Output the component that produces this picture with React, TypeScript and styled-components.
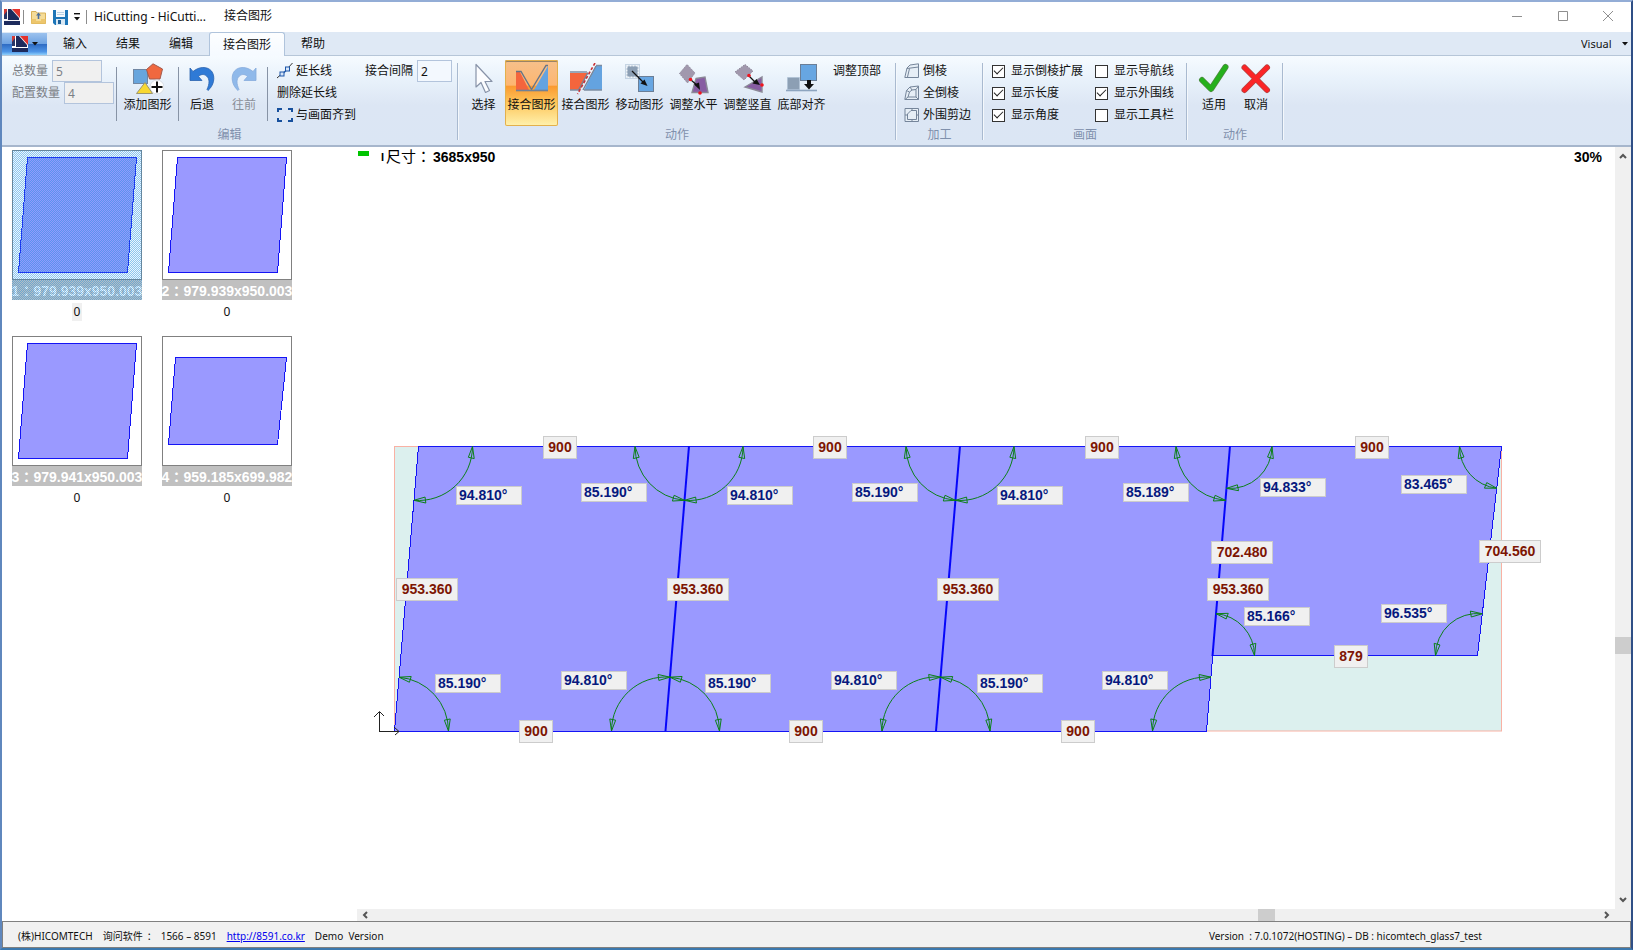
import React from "react";
import styled, { createGlobalStyle, css } from "styled-components";

const GlobalStyle = createGlobalStyle`
  *, *::before, *::after { box-sizing: border-box; }
  html, body { margin: 0; padding: 0; }
  body {
    font-family: "Noto Sans", "Noto Sans CJK SC", sans-serif;
    font-size: 12px;
    line-height: 16px;
    color: #111;
    background: #fff;
  }
  button, input, select { font: inherit; color: inherit; margin: 0; }
  button { cursor: pointer; }
`;

/* ---------- window frame ---------- */

const Window = styled.div`
  display: flex;
  flex-direction: column;
  height: 100vh;
  border: 2px solid;
  border-color: #93add6 #2f4f86 #3b78ae #5f87bd;
  background: #fff;
  overflow: hidden;
`;

const TitleBar = styled.header`
  display: flex;
  align-items: center;
  flex: none;
  height: 30px;
  padding-left: 2px;
`;

const QuickAccess = styled.div`
  display: flex;
  align-items: center;
`;

const IconButton = styled.button<{ $w: number }>`
  display: flex;
  align-items: center;
  justify-content: center;
  width: ${(p) => p.$w}px;
  height: 28px;
  padding: 0;
  border: 0;
  background: none;
`;

const ThinRule = styled.span`
  width: 1px;
  height: 14px;
  margin: 0 3px;
  background: #8c8c8c;
`;

const WindowTitle = styled.h1`
  margin: 0;
  padding-left: 4px;
  width: 134px;
  font-size: 12px;
  font-weight: 400;
  line-height: 20px;
  white-space: nowrap;
`;

const ContextTitle = styled.span`
  flex: 1;
  padding-bottom: 2px;
  line-height: 16px;
`;

const WindowControls = styled.div`
  display: flex;
  align-self: flex-start;
`;

/* ---------- tabs ---------- */

const TabStrip = styled.nav`
  display: flex;
  align-items: flex-end;
  flex: none;
  height: 24px;
  background: #dfe9f5;
  border-bottom: 1px solid #b6c6d8;
`;

const AppButton = styled.button`
  display: flex;
  align-items: center;
  gap: 4px;
  width: 45px;
  height: 22px;
  padding: 0 0 0 10px;
  margin-right: 3px;
  border: 0;
  background: linear-gradient(#9cc2ee 0%, #6fa3e2 48%, #2f6cc4 52%, #4f96e8 85%, #8fd0fb 100%);
`;

const Tab = styled.button<{ $active?: boolean }>`
  height: 23px;
  padding: 0 12px;
  margin-right: 3px;
  border: 1px solid transparent;
  border-bottom: 0;
  border-radius: 3px 3px 0 0;
  background: transparent;
  line-height: 22px;
  white-space: nowrap;
  ${(p) =>
    p.$active &&
    css`
      margin-bottom: -1px;
      height: 24px;
      padding: 0 13px;
      border-color: #b0c4dc;
      background: linear-gradient(#fdfeff, #f5faff);
    `}
`;

const StyleChooser = styled.label`
  display: flex;
  align-items: center;
  gap: 9px;
  height: 22px;
  margin-left: auto;
  padding-right: 3px;
`;

const StyleSelect = styled.select`
  appearance: none;
  width: 32px;
  padding: 0;
  border: 0;
  background: transparent;
  font-size: 11px;
`;

/* ---------- ribbon ---------- */

const Ribbon = styled.div`
  display: flex;
  flex: none;
  height: 91px;
  padding-top: 4px;
  background: linear-gradient(#f6fbff 0%, #e9f2fb 25%, #dce6f4 55%, #dbe6f4 100%);
  border-bottom: 2px solid #a6b6cc;
`;

const Group = styled.section`
  display: flex;
  flex-direction: column;
`;

const GroupBody = styled.div<{ $left: number; $right: number }>`
  display: flex;
  flex: none;
  height: 66px;
  padding: 0 ${(p) => p.$right}px 0 ${(p) => p.$left}px;
`;

const GroupLabel = styled.div`
  text-align: center;
  color: #7f90ac;
  line-height: 18px;
`;

const GroupRule = styled.div`
  flex: none;
  width: 2px;
  height: 77px;
  margin-top: 3px;
  background: linear-gradient(90deg, #a9bad0 50%, #f4f8fc 50%);
`;

const InnerRule = styled.div`
  width: 1px;
  height: 54px;
  margin: 7px 2px 0;
  background: #8793a5;
`;

const Stack = styled.div`
  display: flex;
  flex-direction: column;
`;

const FieldRow = styled.label<{ $muted?: boolean }>`
  display: flex;
  align-items: center;
  gap: 4px;
  height: 22px;
  white-space: nowrap;
  color: ${(p) => (p.$muted ? "#7b7f86" : "#111")};
`;

const Field = styled.input<{ $w: number }>`
  width: ${(p) => p.$w}px;
  height: 22px;
  padding: 0 3px;
  border: 1px solid #b3c4dc;
  background: #f3f8fe;
  &:disabled {
    background: #f0f0f0;
    color: #7b7f86;
  }
`;

const BigButton = styled.button<{ $w: number; $active?: boolean; $muted?: boolean }>`
  display: flex;
  flex-direction: column;
  align-items: center;
  width: ${(p) => p.$w}px;
  height: 66px;
  padding: 3px 0 0;
  border: 0;
  border-radius: 2px;
  background: none;
  color: ${(p) => (p.$muted ? "#8a8f98" : "#111")};
  white-space: nowrap;
  svg { flex: none; margin-bottom: 2px; }
  ${(p) =>
    p.$active &&
    css`
      background: linear-gradient(#f6c08b 0%, #fdb671 38%, #fb9a30 40%, #fdc65c 65%, #fff2ae 100%);
      box-shadow: inset 0 0 0 1px #e3b04c, inset 0 2px 0 #9a8365;
    `}
`;

const ToolRow = styled.div`
  display: flex;
  gap: 1px;
  margin-right: 2px;
`;

const SmallButton = styled.button`
  display: flex;
  align-items: center;
  gap: 3px;
  height: 22px;
  padding: 0 3px;
  border: 0;
  background: none;
  white-space: nowrap;
`;

const CheckRow = styled.label`
  display: flex;
  align-items: center;
  gap: 6px;
  height: 22px;
  white-space: nowrap;
`;

const CheckBox = styled.input`
  appearance: none;
  display: grid;
  place-items: center;
  width: 13px;
  height: 13px;
  border: 1px solid #333;
  background: #fff;
  &:checked::after {
    content: "";
    width: 9px;
    height: 5px;
    margin-bottom: 3px;
    border-left: 1px solid #222;
    border-bottom: 1px solid #222;
    transform: rotate(-45deg);
  }
`;

/* ---------- workspace ---------- */

const Workspace = styled.main`
  display: flex;
  flex: 1;
  min-height: 0;
`;

const PartsPane = styled.ul`
  display: grid;
  grid-template-columns: repeat(2, 130px);
  grid-auto-rows: 171px;
  gap: 15px 20px;
  flex: none;
  align-content: start;
  width: 355px;
  margin: 0;
  padding: 3px 10px;
  list-style: none;
`;

const PartCard = styled.li`
  display: flex;
  flex-direction: column;
  align-items: center;
`;

const PartFace = styled.div<{ $selected?: boolean }>`
  position: relative;
  width: 130px;
  height: 150px;
  overflow: hidden;
  ${(p) =>
    p.$selected &&
    css`
      &::after {
        content: "";
        position: absolute;
        inset: 0;
        background: repeating-conic-gradient(rgba(30, 140, 220, 0.5) 0 25%, rgba(80, 180, 250, 0.12) 0 50%) 0 0 / 2px 2px;
      }
    `}
`;

const PartCaption = styled.div`
  display: flex;
  justify-content: center;
  height: 20px;
  background: #c0c0c0;
  color: #fff;
  font: bold 14px/22px "Liberation Sans", "Noto Sans CJK TC", sans-serif;
  white-space: nowrap;
`;

const PartCount = styled.span<{ $focus?: boolean }>`
  margin-top: 3px;
  padding: 0 2px;
  font-size: 12px;
  line-height: 18px;
  background: ${(p) => (p.$focus ? "#f0f0f0" : "transparent")};
`;

const CanvasPane = styled.section`
  display: grid;
  grid-template: minmax(0, 1fr) 12px / minmax(0, 1fr) 16px;
  flex: 1;
  min-width: 0;
`;

const Viewport = styled.div`
  overflow: hidden;
  svg { display: block; }
`;

const VTrack = styled.div`
  display: flex;
  flex-direction: column;
  align-items: center;
  background: #f0f0f0;
`;

const HTrack = styled.div`
  display: flex;
  align-items: center;
  background: #f0f0f0;
`;

const TrackSpace = styled.span<{ $grow: number }>`
  flex: ${(p) => p.$grow} 1 0;
`;

const VThumb = styled.span`
  width: 16px;
  height: 17px;
  background: #cdcdcd;
`;

const HThumb = styled.span`
  width: 17px;
  height: 12px;
  background: #cdcdcd;
`;

const ArrowButton = styled.button`
  display: flex;
  align-items: center;
  justify-content: center;
  width: 16px;
  height: 100%;
  max-height: 18px;
  padding: 0;
  border: 0;
  background: none;
`;

/* ---------- status bar ---------- */

const StatusBar = styled.footer`
  display: flex;
  align-items: center;
  flex: none;
  height: 27px;
  padding: 2px 148px 0 15px;
  border: 1px solid #808080;
  background: #f1f1f1;
  font-size: 10px;
  white-space: pre;
`;

const StatusText = styled.span<{ $gap?: number }>`
  margin-right: ${(p) => p.$gap ?? 0}px;
`;

const StatusLink = styled.a`
  color: #0000ee;
  margin-right: 10px;
`;

const StatusRight = styled.span`
  margin-left: auto;
`;

/* ---------- icons ---------- */

const Logo = ({ light }: { light?: boolean }) => (
  <svg width="16" height="16" viewBox="0 0 16 16" aria-hidden="true">
    <rect width="16" height="16" fill={light ? "#fff" : "#f6f4f6"} />
    <path d="M0 0H3V10H0Z" fill="#283466" />
    <path d="M0 0H3V2L0 6Z" fill="#d33a35" />
    <path d="M4 0H7L15 9V11H4Z" fill="#1d2a5c" />
    <path d="M8 0H16V9Z" fill="#e3322c" />
    <path d="M0 12H16V16H0Z" fill="#1d2a5c" />
  </svg>
);

const Caret = ({ bar }: { bar?: boolean }) => (
  <svg width="6" height={bar ? 8 : 4} viewBox={bar ? "0 0 6 8" : "0 0 6 4"} aria-hidden="true">
    {bar ? (
      <>
        <rect width="6" height="1.4" fill="#111" />
        <path d="M0 4H6L3 7.5Z" fill="#111" />
      </>
    ) : (
      <path d="M0 0H6L3 3.6Z" fill="#111" />
    )}
  </svg>
);

const FolderIcon = () => (
  <svg width="15" height="14" viewBox="0 0 15 14" aria-hidden="true">
    <path d="M.5 1.5H5L6 3H14.5V13.5H.5Z" fill="#f5dc98" stroke="#d9b257" />
    <path d="M.5 9H5V11H10V9H14.5V13.5H.5Z" fill="#edc66c" />
    <path d="M7.5 2.5L10 5.5H8.3V9H6.7V5.5H5Z" fill="#4d6f9c" />
  </svg>
);

const SaveIcon = () => (
  <svg width="15" height="15" viewBox="0 0 15 15" aria-hidden="true">
    <path d="M0 0H15V15H2L0 13Z" fill="#1c75b8" />
    <rect x="3" y="0" width="9" height="7" fill="#f4f9fd" />
    <path d="M4 2.5H11M4 4.5H11" stroke="#b5cfe4" />
    <rect x="3" y="9" width="9" height="6" fill="#d8e8f4" />
    <rect x="5" y="10" width="3" height="4" fill="#1c5f98" />
  </svg>
);

const WinGlyph = ({ d }: { d: string }) => (
  <svg width="12" height="12" viewBox="0 0 12 12" fill="none" stroke="#8f8f8f" aria-hidden="true">
    <path d={d} />
  </svg>
);

const AddShapeIcon = () => (
  <svg width="32" height="32" viewBox="0 0 32 32" aria-hidden="true">
    <rect x="1.500" y="6.500" width="14" height="14" fill="#67a5dd" stroke="#7187a3" />
    <path d="M21 .8L30.500 6L28 16H17.500L14.500 6.500Z" fill="#f0683f" stroke="#a35a4c" />
    <circle cx="25" cy="24" r="7" fill="#fff" stroke="#d7dce3" />
    <path d="M13 19.500L20.500 30.500H4.500Z" fill="#f8d832" stroke="#9b9670" />
    <path d="M25 18.500V29.500M19.500 24H30.500" stroke="#111" strokeWidth="2" />
  </svg>
);

const UndoIcon = ({ redo }: { redo?: boolean }) => (
  <svg width="26" height="32" viewBox="0 0 26 32" aria-hidden="true">
    <g transform={redo ? "translate(26 0) scale(-1 1)" : undefined}>
      <path
        d="M1 5L4 8.500C10 3.500 18 3 22.500 8C27 14 24.500 23 19 27.500L18 26.500C20.500 21 21 16 17.500 13C14.500 10.500 11.500 11.500 9.500 13.500L13 17.500L1 17.500Z"
        fill={redo ? "#8fb9ea" : "#2f7ad6"}
        stroke={redo ? "#86abdc" : "#2a62ad"}
        strokeWidth=".8"
      />
    </g>
  </svg>
);

const ExtendIcon = () => (
  <svg width="16" height="16" viewBox="0 0 16 16" fill="none" aria-hidden="true">
    <path d="M0 15L4 11.500M11 5L15.500 0" stroke="#333" />
    <path d="M6 10.500L9 7.500" stroke="#1d56a8" strokeWidth="1.400" />
    <rect x="3" y="9" width="4" height="4" fill="#d6e6fa" stroke="#1d56a8" />
    <rect x="8.500" y="4" width="4" height="4" fill="#d6e6fa" stroke="#1d56a8" />
  </svg>
);

const FitIcon = () => (
  <svg width="16" height="16" viewBox="0 0 16 16" fill="none" stroke="#17509d" strokeWidth="2" aria-hidden="true">
    <path d="M1 5V2H5M11 2H15V5M15 11V14H11M5 14H1V11" />
  </svg>
);

const PointerIcon = () => (
  <svg width="32" height="32" viewBox="0 0 32 32" aria-hidden="true">
    <path
      d="M8 1.500V24L13 19.500L17.500 29.500L21.500 27.500L17 18.500H24Z"
      fill="#fcfdff"
      stroke="#8893a8"
      strokeWidth="1.200"
      strokeLinejoin="round"
    />
  </svg>
);

const JoinIcon = () => (
  <svg width="32" height="32" viewBox="0 0 32 32" aria-hidden="true">
    <path d="M0 9H4L13 27H0Z" fill="#f4653d" />
    <path d="M32 3V27H18Z" fill="#64a3e0" />
    <path d="M0 8.500H5L15.500 26.500L30 2.500H32" fill="none" stroke="#667487" strokeWidth="1.400" />
    <path d="M0 27.500H32" stroke="#708196" strokeWidth="1.600" />
  </svg>
);

const CutIcon = () => (
  <svg width="32" height="32" viewBox="0 0 32 32" aria-hidden="true">
    <path d="M0 10H18L10 27H0Z" fill="#f4653d" />
    <path d="M26 3H32V27H14Z" fill="#64a3e0" />
    <path d="M0 9H17M26 2.500H32M0 27H9M14 27H32" stroke="#7d8da3" strokeWidth="1.600" />
    <path d="M18 9.500L8.500 27M26 3L13 27" stroke="#758396" strokeWidth="1.400" />
    <path d="M25 0L7.500 31" stroke="#c83035" strokeWidth="1.600" strokeDasharray="3 2" />
  </svg>
);

const MoveIcon = () => (
  <svg width="32" height="32" viewBox="0 0 32 32" aria-hidden="true">
    <rect x="2.500" y="2.500" width="12" height="12" fill="#8c9fb4" stroke="#f0f5fa" strokeDasharray="2 1" strokeWidth="2" />
    <rect x="1.500" y="1.500" width="14" height="14" fill="none" stroke="#9db3cb" strokeDasharray="1 1" />
    <rect x="14.500" y="13.500" width="15" height="15" fill="#67a6e2" stroke="#6b7e96" />
    <path d="M8 8L19 19" stroke="#111" strokeWidth="1.200" />
    <path d="M23.500 23L16.500 20.500L20.500 16.500Z" fill="#111" />
  </svg>
);

const AlignIcon = ({ vertical }: { vertical?: boolean }) =>
  vertical ? (
    <svg width="32" height="32" viewBox="0 0 32 32" aria-hidden="true">
      <path d="M3 9L13 1.500L21 8L12 17Z" fill="#a198ad" stroke="#8f889a" strokeDasharray="1.500 1" />
      <path d="M13 24L30 14V29Z" fill="#875ca2" stroke="#8b8997" strokeWidth="1.400" />
      <path d="M17 13L23 19" stroke="#111" strokeWidth="1.200" />
      <path d="M28 22L20.500 20.500L24.500 16Z" fill="#111" />
      <circle cx="17" cy="12.500" r="1.800" fill="#f0141e" />
      <circle cx="30" cy="22" r="1.800" fill="#f0141e" />
    </svg>
  ) : (
    <svg width="32" height="32" viewBox="0 0 32 32" aria-hidden="true">
      <path d="M1.500 10.500L9 1.500L17 10L9.500 20Z" fill="#a198ad" stroke="#8f889a" strokeDasharray="1.500 1" />
      <path d="M18 15.500L27 14L30 29.500H14Z" fill="#875ca2" stroke="#8b8997" strokeWidth="1.400" />
      <path d="M13 17L20 23" stroke="#111" strokeWidth="1.200" />
      <path d="M22 27L16 21.500L21 19.500Z" fill="#111" />
      <circle cx="12.500" cy="16.500" r="1.800" fill="#f0141e" />
      <circle cx="22" cy="30" r="1.800" fill="#f0141e" />
    </svg>
  );

const BottomIcon = () => (
  <svg width="32" height="32" viewBox="0 0 32 32" aria-hidden="true">
    <rect x="1.500" y="14.500" width="12" height="12" fill="#8c9fb4" stroke="#a9bdd2" strokeDasharray="1 1" />
    <rect x="14.500" y="1.500" width="16" height="16" fill="#67a6e2" stroke="#6b7e96" />
    <path d="M0 27.500H31" stroke="#8da4bf" strokeWidth="1.600" />
    <path d="M21 17H25V21H28L23 26.500L18 21H21Z" fill="#111" />
  </svg>
);

const BevelIcon = ({ kind }: { kind: 0 | 1 | 2 }) => (
  <svg width="16" height="16" viewBox="0 0 16 16" fill="#e6eef6" stroke="#75859a" aria-hidden="true">
    {kind === 0 && (
      <>
        <path d="M.8 14.500L3 5L6 2L14.500 .8V14.500Z" />
        <path d="M3 5.500L14.500 4M3.500 14L5.500 5.500" fill="none" />
      </>
    )}
    {kind === 1 && (
      <>
        <path d="M.8 14.500L2.500 5.500L6 2L14.500 1V14.500Z" />
        <path d="M4 12L5.500 7L8 5L12 4.500V12ZM1 14.500L4 12M14.500 14.500L12 12M14.500 1L12 4.500M2.500 5.500L5.500 7M6 2L8 5" fill="none" />
      </>
    )}
    {kind === 2 && (
      <>
        <path d="M1 1.500H14.500V14.500H1Z" />
        <path d="M3.500 12.500V7L7 3.500H12.500V12.500ZM8 1.500V3.500M1 8H3.500M12.500 8H14.500M8 12.500V14.500" fill="none" />
      </>
    )}
  </svg>
);

const ApplyIcon = () => (
  <svg width="32" height="32" viewBox="0 0 32 32" fill="none" strokeLinecap="round" strokeLinejoin="round" aria-hidden="true">
    <path d="M4 17L13 26L27.500 4" stroke="#4f8a42" strokeWidth="6" />
    <path d="M4 17L13 26L27.500 4" stroke="#25b01c" strokeWidth="4.500" />
  </svg>
);

const CancelIcon = () => (
  <svg width="32" height="32" viewBox="0 0 32 32" fill="none" strokeLinecap="round" aria-hidden="true">
    <path d="M4.500 4.500L27 27M27 4.500L4.500 27" stroke="#b3423f" strokeWidth="6" />
    <path d="M4.500 4.500L27 27M27 4.500L4.500 27" stroke="#fb2426" strokeWidth="4.500" />
  </svg>
);

const Chevron = ({ d }: { d: string }) => (
  <svg width="8" height="8" viewBox="0 0 8 8" fill="none" stroke="#555" strokeWidth="2" aria-hidden="true">
    <path d={d} />
  </svg>
);

/* ---------- drawing data ---------- */

type Point = [number, number];

const pieces: Point[][] = [
  [[418.5, 446.5], [689, 446.5], [665.5, 731], [394.5, 731]],
  [[689, 446.5], [960, 446.5], [936, 731], [665.5, 731]],
  [[960, 446.5], [1230, 446.5], [1206.5, 731], [936, 731]],
  [[1230, 446.5], [1501.5, 446.5], [1477.5, 655.5], [1212.5, 655.5]],
];

const joints: [Point, Point][] = [
  [[689, 446], [665.5, 731]],
  [[960, 446], [936, 731]],
  [[1230, 446], [1212.5, 656]],
];

const lengths: [number, number, string][] = [
  [543, 436, "900"], [813, 436, "900"], [1085, 436, "900"], [1355, 436, "900"],
  [519, 720, "900"], [789, 720, "900"], [1061, 720, "900"], [1334, 645, "879"],
  [396, 578, "953.360"], [667, 578, "953.360"], [937, 578, "953.360"],
  [1211, 541, "702.480"], [1207, 578, "953.360"], [1479, 540, "704.560"],
];

const angles: [number, number, string][] = [
  [456, 486, "94.810"], [581, 483, "85.190"], [435, 674, "85.190"], [561, 671, "94.810"],
  [727, 486, "94.810"], [852, 483, "85.190"], [705, 674, "85.190"], [831, 671, "94.810"],
  [997, 486, "94.810"], [1123, 483, "85.189"], [977, 674, "85.190"], [1102, 671, "94.810"],
  [1260, 478, "94.833"], [1401, 475, "83.465"], [1244, 607, "85.166"], [1381, 604, "96.535"],
];

/* Arrow head whose tip lies on the arc at angle a and whose base lies further along it. */
const head = (cx: number, cy: number, r: number, a: number, dir: number) => {
  const back = a + (dir * 11.5) / r;
  const at = (rad: number, ang: number) => `${cx + rad * Math.cos(ang)},${cy + rad * Math.sin(ang)}`;
  return `M${at(r, a)}L${at(r - 3, back)}L${at(r + 3, back)}Z`;
};

const AngleArc = ({ corner, prev, next, r }: { corner: Point; prev: Point; next: Point; r: number }) => {
  const [cx, cy] = corner;
  const a = Math.atan2(next[1] - cy, next[0] - cx);
  let b = Math.atan2(prev[1] - cy, prev[0] - cx);
  if (b < a) b += Math.PI * 2;
  const pt = (ang: number) => `${cx + r * Math.cos(ang)} ${cy + r * Math.sin(ang)}`;
  return (
    <path
      d={`M${pt(a)}A${r} ${r} 0 0 1 ${pt(b)}${head(cx, cy, r, a, 1)}${head(cx, cy, r, b, -1)}`}
      fill="none"
      stroke="#0c8018"
    />
  );
};

const drawingFont = { fontFamily: '"Liberation Sans", "Noto Sans CJK TC", sans-serif', fontSize: 14, fontWeight: 700 };

const Drawing = () => (
  <svg width="1258" height="762" viewBox="357 147 1258 762" role="img" aria-label="接合图形">
    <rect x="358" y="151" width="11" height="5" fill="#00c400" />
    <text x="381" y="161" {...drawingFont} fontSize={11}>I</text>
    <text x="386" y="162" {...drawingFont} fontWeight={400} fontSize={15}>尺寸：</text>
    <text x="433" y="162" {...drawingFont}>3685x950</text>
    <text x="1602" y="162" textAnchor="end" {...drawingFont}>30%</text>

    <rect x="394.500" y="446.500" width="1107" height="284.500" fill="#dcf0ee" stroke="#f9b1a4" />
    {pieces.map((p, i) => (
      <polygon key={i} points={p.join(" ")} fill="#9a99ff" stroke="#1414f5" shapeRendering="crispEdges" />
    ))}
    {joints.map(([a, b], i) => (
      <path key={i} d={`M${a}L${b}`} stroke="#0606fa" strokeWidth="2" />
    ))}
    {pieces.map((p, i) =>
      p.map((c, j) => (
        <AngleArc key={`${i}-${j}`} corner={c} prev={p[(j + 3) % 4]} next={p[(j + 1) % 4]} r={i === 3 ? 42 : 54} />
      ))
    )}
    <path d="M379.500 712V731M374 717L379.500 711.500L384 716M379 731.500H399M394 727L399 731.500L395 735" fill="none" stroke="#222" />
    {angles.map(([x, y, t], i) => (
      <g key={i}>
        <rect x={x + 0.5} y={y + 0.5} width="65" height="18" fill="#f0f0f0" stroke="#ccc" />
        <text x={x + 3} y={y + 14} fill="#06187e" {...drawingFont}>{t}°</text>
      </g>
    ))}
    {lengths.map(([x, y, t], i) => {
      const w = t.length > 3 ? 62 : 34;
      return (
        <g key={i}>
          <rect x={x + 0.5} y={y + 0.5} width={w - 1} height="22" fill="#f0f0f0" stroke="#ccc" />
          <text x={x + w / 2} y={y + 16} textAnchor="middle" fill="#7d1503" {...drawingFont}>{t}</text>
        </g>
      );
    })}
  </svg>
);

const parts = [
  { name: "1：979.939x950.003", points: "15.5,7.5 124.5,7.5 115.5,122.5 6.5,122.5", selected: true },
  { name: "2：979.939x950.003", points: "15.5,7.5 124.5,7.5 115.5,122.5 6.5,122.5" },
  { name: "3：979.941x950.003", points: "15.5,7.5 124.5,7.5 115.5,122.5 6.5,122.5" },
  { name: "4：959.185x699.982", points: "13.5,21.5 124.5,21.5 115.5,108.5 6.5,108.5" },
];

const tools = [
  { label: "接合图形", icon: <JoinIcon />, active: true },
  { label: "接合图形", icon: <CutIcon /> },
  { label: "移动图形", icon: <MoveIcon /> },
  { label: "调整水平", icon: <AlignIcon /> },
  { label: "调整竖直", icon: <AlignIcon vertical /> },
  { label: "底部对齐", icon: <BottomIcon /> },
];

const Check = ({ label, on }: { label: string; on?: boolean }) => (
  <CheckRow>
    <CheckBox type="checkbox" defaultChecked={on} />
    {label}
  </CheckRow>
);

const ChecksColumn = styled(Stack)`
  & + & { margin-left: 12px; }
`;

const GapField = styled.div`
  margin-left: 4px;
`;

const EditStack = styled(Stack)`
  width: 87px;
  margin-left: 4px;
`;

export default function App() {
  return (
    <Window>
      <GlobalStyle />
      <TitleBar>
        <QuickAccess>
          <Logo />
          <ThinRule />
          <IconButton $w={22} aria-label="打开"><FolderIcon /></IconButton>
          <IconButton $w={22} aria-label="保存"><SaveIcon /></IconButton>
          <IconButton $w={12} aria-label="更多"><Caret bar /></IconButton>
          <ThinRule />
        </QuickAccess>
        <WindowTitle>HiCutting - HiCutti...</WindowTitle>
        <ContextTitle>接合图形</ContextTitle>
        <WindowControls>
          <IconButton $w={46} aria-label="最小化"><WinGlyph d="M1 6.5H11" /></IconButton>
          <IconButton $w={45} aria-label="最大化"><WinGlyph d="M1.5 1.5H10.5V10.5H1.5Z" /></IconButton>
          <IconButton $w={46} aria-label="关闭"><WinGlyph d="M1 1L11 11M11 1L1 11" /></IconButton>
        </WindowControls>
      </TitleBar>

      <TabStrip>
        <AppButton aria-label="菜单"><Logo light /><Caret /></AppButton>
        <Tab>输入</Tab>
        <Tab>结果</Tab>
        <Tab>编辑</Tab>
        <Tab $active>接合图形</Tab>
        <Tab>帮助</Tab>
        <StyleChooser>
          <StyleSelect aria-label="Visual" defaultValue="Visual">
            <option>Visual</option>
          </StyleSelect>
          <Caret />
        </StyleChooser>
      </TabStrip>

      <Ribbon>
        <Group>
          <GroupBody $left={10} $right={5}>
            <Stack>
              <FieldRow $muted>总数量<Field $w={50} disabled defaultValue="5" /></FieldRow>
              <FieldRow $muted>配置数量<Field $w={50} disabled defaultValue="4" /></FieldRow>
            </Stack>
            <InnerRule />
            <BigButton $w={57}><AddShapeIcon />添加图形</BigButton>
            <InnerRule />
            <BigButton $w={42}><UndoIcon />后退</BigButton>
            <BigButton $w={42} $muted><UndoIcon redo />往前</BigButton>
            <InnerRule />
            <EditStack>
              <SmallButton><ExtendIcon />延长线</SmallButton>
              <SmallButton>删除延长线</SmallButton>
              <SmallButton><FitIcon />与画面齐到</SmallButton>
            </EditStack>
            <GapField>
              <FieldRow>接合间隔<Field $w={35} defaultValue="2" /></FieldRow>
            </GapField>
          </GroupBody>
          <GroupLabel>编辑</GroupLabel>
        </Group>
        <GroupRule />

        <Group>
          <GroupBody $left={4} $right={11}>
            <ToolRow>
              <BigButton $w={41}><PointerIcon />选择</BigButton>
              {tools.map((t, i) => (
                <BigButton key={i} $w={53} $active={t.active}>{t.icon}{t.label}</BigButton>
              ))}
            </ToolRow>
            <SmallButton>调整顶部</SmallButton>
          </GroupBody>
          <GroupLabel>动作</GroupLabel>
        </Group>
        <GroupRule />

        <Group>
          <GroupBody $left={4} $right={8}>
            <Stack>
              <SmallButton><BevelIcon kind={0} />倒棱</SmallButton>
              <SmallButton><BevelIcon kind={1} />全倒棱</SmallButton>
              <SmallButton><BevelIcon kind={2} />外围剪边</SmallButton>
            </Stack>
          </GroupBody>
          <GroupLabel>加工</GroupLabel>
        </Group>
        <GroupRule />

        <Group>
          <GroupBody $left={8} $right={12}>
            <ChecksColumn>
              <Check label="显示倒棱扩展" on />
              <Check label="显示长度" on />
              <Check label="显示角度" on />
            </ChecksColumn>
            <ChecksColumn>
              <Check label="显示导航线" />
              <Check label="显示外围线" on />
              <Check label="显示工具栏" />
            </ChecksColumn>
          </GroupBody>
          <GroupLabel>画面</GroupLabel>
        </Group>
        <GroupRule />

        <Group>
          <GroupBody $left={5} $right={5}>
            <BigButton $w={42}><ApplyIcon />适用</BigButton>
            <BigButton $w={42}><CancelIcon />取消</BigButton>
          </GroupBody>
          <GroupLabel>动作</GroupLabel>
        </Group>
        <GroupRule />
      </Ribbon>

      <Workspace>
        <PartsPane>
          {parts.map((p) => (
            <PartCard key={p.name}>
              <PartFace $selected={p.selected}>
                <svg width="130" height="130" viewBox="0 0 130 130" display="block" aria-hidden="true">
                  <rect x=".5" y=".5" width="129" height="129" fill="#fff" stroke="#808080" />
                  <polygon points={p.points} fill="#9a99ff" stroke="#1414f5" shapeRendering="crispEdges" />
                </svg>
                <PartCaption>{p.name}</PartCaption>
              </PartFace>
              <PartCount $focus={p.selected}>0</PartCount>
            </PartCard>
          ))}
        </PartsPane>
        <CanvasPane>
          <Viewport><Drawing /></Viewport>
          <VTrack>
            <ArrowButton aria-label="向上"><Chevron d="M1 6L4 3L7 6" /></ArrowButton>
            <TrackSpace $grow={472} />
            <VThumb />
            <TrackSpace $grow={237} />
            <ArrowButton aria-label="向下"><Chevron d="M1 2L4 5L7 2" /></ArrowButton>
          </VTrack>
          <HTrack>
            <ArrowButton aria-label="向左"><Chevron d="M6 1L3 4L6 7" /></ArrowButton>
            <TrackSpace $grow={885} />
            <HThumb />
            <TrackSpace $grow={324} />
            <ArrowButton aria-label="向右"><Chevron d="M2 1L5 4L2 7" /></ArrowButton>
          </HTrack>
          <HTrack />
        </CanvasPane>
      </Workspace>

      <StatusBar>
        <StatusText $gap={10}>(株)HICOMTECH</StatusText>
        <StatusText $gap={4}>询问软件</StatusText>
        <StatusText $gap={4}>：</StatusText>
        <StatusText $gap={10}>1566 – 8591</StatusText>
        <StatusLink href="http://8591.co.kr">http://8591.co.kr</StatusLink>
        <StatusText>Demo  Version</StatusText>
        <StatusRight>Version  : 7.0.1072(HOSTING) – DB : hicomtech_glass7_test</StatusRight>
      </StatusBar>
    </Window>
  );
}
